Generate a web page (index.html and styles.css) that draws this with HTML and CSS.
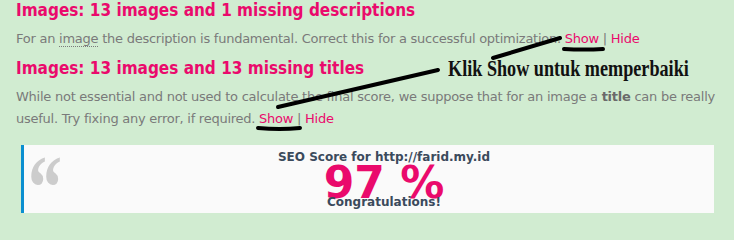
FILE: index.html
```html
<!DOCTYPE html>
<html>
<head>
<meta charset="utf-8">
<link rel="stylesheet" href="styles.css">
</head>
<body>
<div class="page">
  <h2 class="heading">Images: 13 images and 1 missing descriptions</h2>
  <p class="text">For an <abbr class="term" title="image">image</abbr> the description is fundamental. Correct this for a successful optimization. <a class="link" href="#">Show</a> | <a class="link" href="#">Hide</a></p>
  <h2 class="heading">Images: 13 images and 13 missing titles</h2>
  <p class="text">While not essential and not used to calculate the final score, we suppose that for an image a <strong class="strong">title</strong> can be really useful. Try fixing any error, if required. <a class="link" href="#">Show</a> | <a class="link" href="#">Hide</a></p>
  <blockquote class="score">
    <div class="score-title">SEO Score for http://farid.my.id</div>
    <div class="score-value">97 %</div>
    <div class="score-note">Congratulations!</div>
  </blockquote>

  <div class="annotation">
    <svg class="strokes" width="734" height="220" viewBox="0 0 734 220">
      <path d="M493 58 L560 38" />
      <path d="M564 49 Q584 50 603 49" />
      <path d="M278 107 L438 70" />
      <path d="M258 128 Q280 130 300 128" />
    </svg>
    <div class="note">Klik Show untuk memperbaiki</div>
  </div>
</div>
</body>
</html>
```
FILE: styles.css
```css
html, body {
  margin: 0;
  padding: 0;
}
body {
  background: #d1ecd1;
  width: 734px;
  height: 220px;
  overflow: hidden;
}
.page {
  position: relative;
  padding: 0 14px 0 16px;
  font-family: "DejaVu Sans", Verdana, sans-serif;
  height: 220px;
}
.heading {
  margin: 0;
  font-family: "DejaVu Sans Condensed", "DejaVu Sans", sans-serif;
  font-stretch: condensed;
  font-size: 17px;
  line-height: 20px;
  font-weight: bold;
  color: #ea0a6c;
}
.text {
  margin: 8px 0;
  font-size: 13px;
  letter-spacing: -0.25px;
  line-height: 22px;
  color: #7a7a7a;
}
.term {
  text-decoration: none;
  border-bottom: 1px dotted #7a7a7a;
}
.strong {
  color: #6a6a6a;
}
.link {
  color: #ea0a6c;
  text-decoration: none;
}
.score {
  position: relative;
  margin: 15px 6px 0 5px;
  background: #fafafa;
  border-left: 3px solid #0a8fd0;
  padding: 4px 0 3px 30px;
  text-align: center;
  font-weight: bold;
  color: #3b4a5c;
}
.score::before {
  content: "\201C";
  position: absolute;
  left: 4px;
  top: -4px;
  font-family: "Liberation Serif", serif;
  font-size: 68px;
  line-height: 68px;
  color: #cccccc;
  transform: scaleY(1.35);
  transform-origin: left top;
}
.score-title {
  font-size: 12px;
  line-height: 16px;
}
.score-value {
  font-size: 44px;
  line-height: 36px;
  color: #ea0a6c;
}
.score-note {
  font-size: 12px;
  line-height: 16px;
  margin-top: -7px;
}
.annotation {
  position: absolute;
  left: 0;
  top: 0;
  width: 734px;
  height: 220px;
  pointer-events: none;
}
.strokes {
  position: absolute;
  left: 0;
  top: 0;
}
.strokes path {
  stroke: #000;
  stroke-width: 4;
  stroke-linecap: round;
  fill: none;
}
.note {
  position: absolute;
  left: 448px;
  top: 56px;
  font-family: "Liberation Serif", serif;
  font-weight: bold;
  font-size: 23px;
  line-height: 26px;
  color: #111;
  white-space: nowrap;
  transform: scaleX(0.79);
  transform-origin: left top;
}
```
